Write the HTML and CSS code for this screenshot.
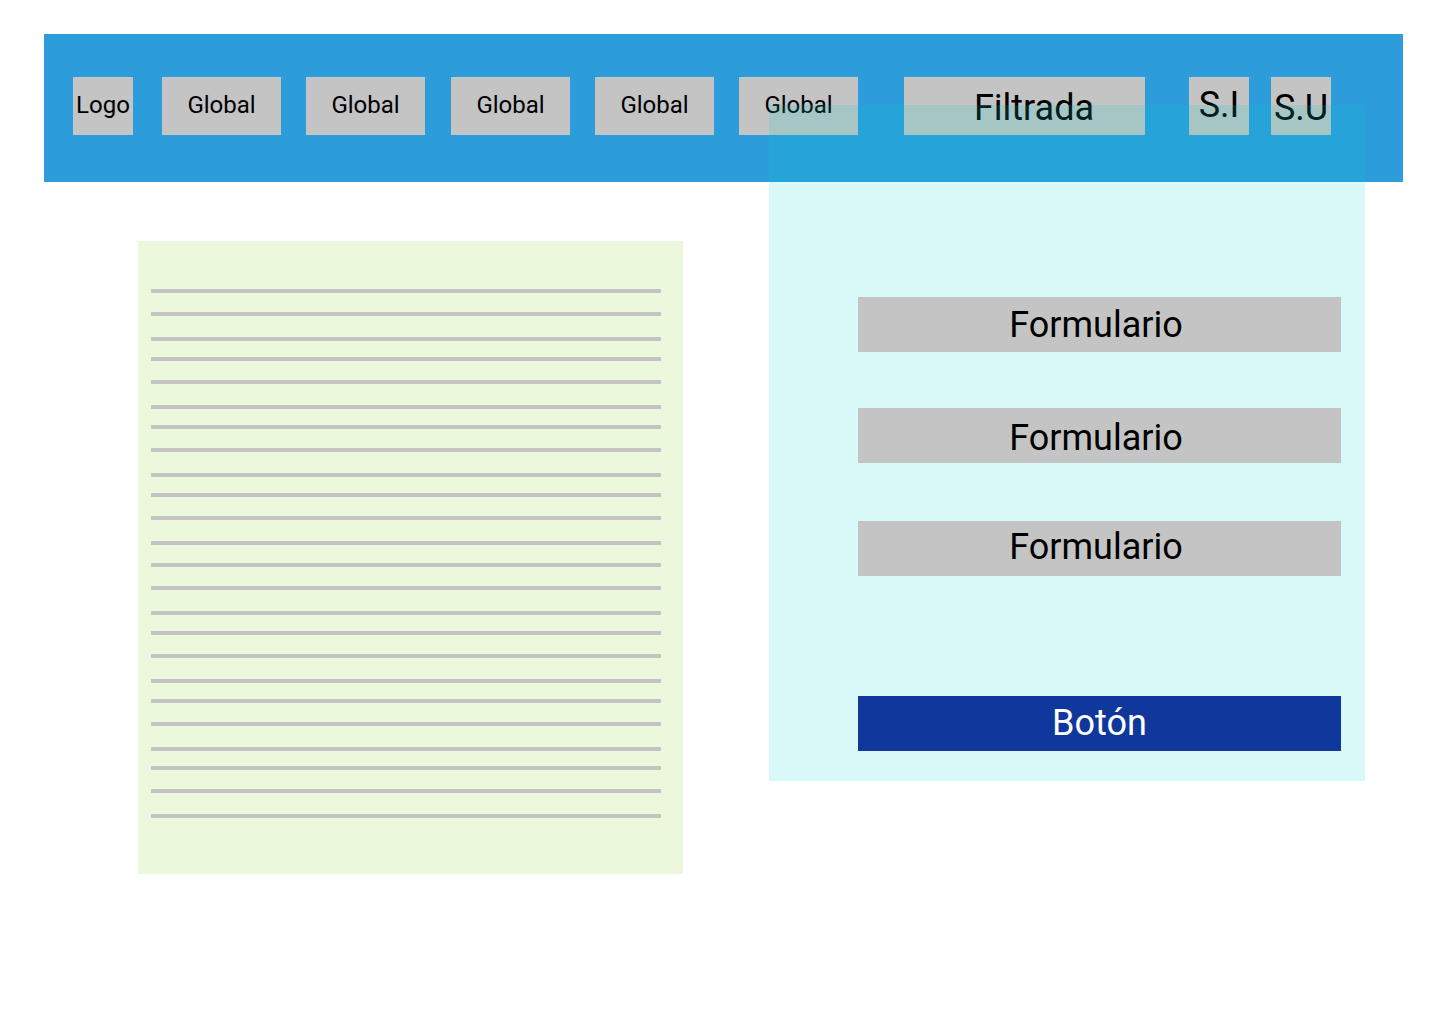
FILE: index.html
```html
<!DOCTYPE html>
<html lang="es">
<head>
<meta charset="utf-8">
<title>Wireframe</title>
<link rel="stylesheet" href="styles.css">
</head>
<body>
<header class="topbar">
  <div class="nav-box logo">Logo</div>
  <div class="nav-box global">Global</div>
  <div class="nav-box global">Global</div>
  <div class="nav-box global">Global</div>
  <div class="nav-box global">Global</div>
  <div class="nav-box global">Global</div>
  <div class="nav-box filter">Filtrada</div>
  <div class="nav-box session si">S.I</div>
  <div class="nav-box session su">S.U</div>
</header>
<main class="content">
  <section class="text-panel">
    <div class="line-group"><span class="line"></span><span class="line"></span><span class="line"></span></div>
    <div class="line-group"><span class="line"></span><span class="line"></span><span class="line"></span></div>
    <div class="line-group"><span class="line"></span><span class="line"></span><span class="line"></span></div>
    <div class="line-group"><span class="line"></span><span class="line"></span><span class="line"></span></div>
    <div class="line-group"><span class="line"></span><span class="line"></span><span class="line"></span></div>
    <div class="line-group"><span class="line"></span><span class="line"></span><span class="line"></span></div>
    <div class="line-group"><span class="line"></span><span class="line"></span><span class="line"></span></div>
    <div class="line-group"><span class="line"></span><span class="line"></span><span class="line"></span></div>
  </section>
</main>
<aside class="form-panel">
  <div class="field">Formulario</div>
  <div class="field">Formulario</div>
  <div class="field">Formulario</div>
  <button class="submit">Botón</button>
</aside>
</body>
</html>
```
FILE: styles.css
```css
html, body {
  margin: 0;
  padding: 0;
  background: #ffffff;
}

body {
  font-family: Roboto, "Liberation Sans", sans-serif;
  color: #000000;
  position: relative;
  min-height: 1024px;
}

/* Top navigation bar */
.topbar {
  display: flex;
  align-items: flex-start;
  margin: 34px 37px 0 44px;
  height: 148px;
  box-sizing: border-box;
  padding: 43px 0 0 29px;
  background: #2d9cdb;
}

.nav-box {
  flex: none;
  height: 58px;
  box-sizing: border-box;
  background: #c4c4c4;
  display: flex;
  align-items: center;
  justify-content: center;
  font-size: 24px;
  white-space: nowrap;
}

.logo {
  width: 60px;
  padding-bottom: 2px;
}

.global {
  width: 119px;
  margin-left: 25px;
  padding-bottom: 2px;
}

.logo + .global {
  margin-left: 29px;
}

.global:nth-child(4) {
  margin-left: 26px;
}

.filter {
  width: 241px;
  margin-left: 46px;
  padding-left: 19px;
  padding-top: 3px;
  font-size: 36px;
}

.session {
  width: 60px;
  font-size: 36px;
}

.si {
  margin-left: 44px;
  padding-bottom: 3px;
}

.su {
  margin-left: 22px;
  padding-top: 4px;
}

/* Left text block */
.content {
  padding: 59px 0 0 138px;
}

.text-panel {
  width: 545px;
  height: 633px;
  box-sizing: border-box;
  padding: 48px 22px 0 13px;
  background: #ecf8dc;
  display: flex;
  flex-direction: column;
  gap: 16px;
}

.line-group {
  display: flex;
  flex-direction: column;
}

.line-group:nth-child(5) {
  margin-top: 2px;
}

.line-group:nth-child(8) {
  margin-top: -1px;
}

.line {
  display: block;
  height: 4px;
  background: #c4c4c4;
}

.line + .line {
  margin-top: 19px;
}

.line:nth-child(3) {
  margin-top: 21px;
}

/* Translucent form overlay */
.form-panel {
  position: absolute;
  left: 769px;
  top: 105px;
  width: 596px;
  height: 676px;
  box-sizing: border-box;
  padding: 192px 24px 0 89px;
  background: rgba(0, 206, 209, 0.15);
  display: flex;
  flex-direction: column;
}

.field {
  height: 55px;
  box-sizing: border-box;
  background: #c4c4c4;
  display: flex;
  align-items: center;
  justify-content: center;
  padding-right: 7px;
  font-size: 36px;
}

.field + .field {
  margin-top: 56px;
  padding-top: 5px;
}

.field:nth-child(3) {
  margin-top: 58px;
  padding-top: 0;
  padding-bottom: 4px;
}

.submit {
  margin-top: 120px;
  height: 55px;
  padding: 0 0 2px 0;
  border: 0;
  background: #0f379c;
  color: #ffffff;
  font-family: inherit;
  font-size: 36px;
}
```
